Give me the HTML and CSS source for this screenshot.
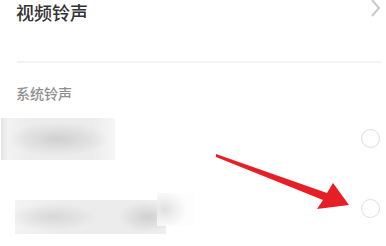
FILE: index.html
```html
<!DOCTYPE html>
<html lang="zh">
<head>
<meta charset="utf-8">
<link rel="stylesheet" href="styles.css">
</head>
<body>
<div class="page">
  <div class="nav-row">
    <span class="nav-title">视频铃声</span>
    <svg class="chevron" width="12" height="18" viewBox="0 0 12 18"><polyline points="2,0 9,8 2,16" fill="none" stroke="#c9c9c9" stroke-width="2"/></svg>
  </div>
  <div class="divider"></div>
  <div class="section-label">系统铃声</div>
  <div class="item">
    <div class="redact redact-a"></div>
    <span class="radio"></span>
  </div>
  <div class="item">
    <div class="redact-group">
      <div class="redact redact-b"></div>
      <div class="redact redact-c"></div>
    </div>
    <span class="radio"></span>
  </div>
  <svg class="arrow" width="386" height="246" viewBox="0 0 386 246">
    <polygon points="216,154 327,193 333,183 349,205 317,209 323,200 216,157" fill="#e61f26"/>
  </svg>
</div>
</body>
</html>
```
FILE: styles.css
```css
html, body {
  margin: 0;
  padding: 0;
  background: #ffffff;
}
body {
  font-family: "Noto Sans CJK SC", "Noto Sans", sans-serif;
  overflow: hidden;
}
.page {
  position: relative;
  width: 386px;
  height: 246px;
}
.nav-row {
  display: flex;
  justify-content: space-between;
  align-items: flex-start;
  height: 24px;
  padding: 0 4px 0 16px;
}
.nav-title {
  font-size: 18px;
  line-height: 24px;
  font-weight: 500;
  color: #333333;
}
.chevron {
  display: block;
}
.divider {
  height: 2px;
  background: #f3f3f3;
  margin: 37px 5px 0 17px;
}
.section-label {
  margin-top: 20px;
  padding-left: 16px;
  font-size: 14px;
  line-height: 20px;
  font-weight: 500;
  color: #8f8f8f;
}
.item {
  display: flex;
  align-items: center;
  justify-content: space-between;
  height: 70px;
  padding-right: 6px;
}
.radio {
  width: 17px;
  height: 17px;
  border: 1.5px solid #dedede;
  border-radius: 50%;
}
.redact {
  background:
    radial-gradient(ellipse 45% 40% at 50% 50%, rgba(205,205,205,0.9) 0%, rgba(205,205,205,0) 100%),
    linear-gradient(90deg, #e4e4e4 0%, #f2f2f2 6%, #ececec 25%, #ececec 80%, #f6f6f6 100%);
}
.redact-a {
  width: 114px;
  height: 42px;
  margin-left: 1px;
  margin-top: 2px;
}
.redact-group {
  display: flex;
  align-items: flex-start;
  margin-left: 15px;
  margin-top: 10px;
}
.redact-b {
  width: 151px;
  height: 34px;
  margin-top: 7px;
  background:
    radial-gradient(ellipse 30% 40% at 25% 50%, rgba(210,210,210,0.8) 0%, rgba(210,210,210,0) 100%),
    radial-gradient(ellipse 20% 45% at 88% 50%, rgba(205,205,205,0.9) 0%, rgba(205,205,205,0) 100%),
    linear-gradient(90deg, #f3f3f3 0%, #ececec 30%, #ececec 85%, #f0f0f0 100%);
}
.redact-c {
  width: 38px;
  height: 33px;
  margin-left: -9px;
  background: radial-gradient(ellipse 60% 60% at 20% 50%, #e0e0e0 0%, #f3f3f3 60%, #fdfdfd 100%);
}
.arrow {
  position: absolute;
  left: 0;
  top: 0;
  pointer-events: none;
}
```
